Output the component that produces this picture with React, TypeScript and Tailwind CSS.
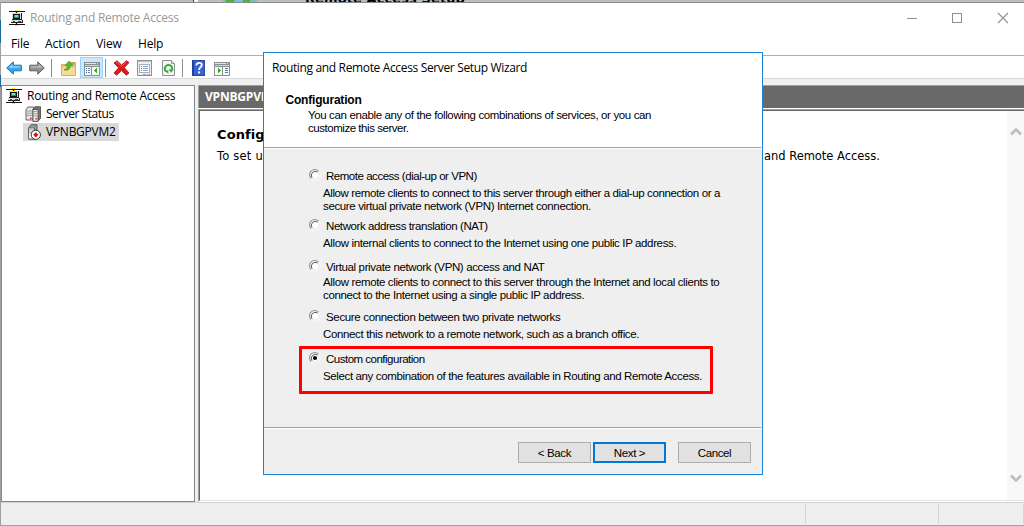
import type { ReactNode } from "react";

function RouterIcon() {
  return (
    <svg width="16" height="16" viewBox="0 0 16 16" shapeRendering="crispEdges" className="shrink-0">
      <path d="M0 1h16v1H0zM0 14h16v1H0z" fill="#111" />
      <path d="M6 0h3v1H6zM6 2h3v1H6zM6 13h3v1H6zM6 15h3v1H6z" fill="#ffe600" />
      <path d="M7 1h1v2H7zM7 13h1v2H7z" fill="#111" />
      <path d="M3 3h10v7H3z" fill="#222" />
      <path d="M3 3h9v6H3z" fill="#dcdcdc" />
      <path d="M4 4h7v5H4z" fill="#111" />
      <path d="M5 5h5v3H5z" fill="#1d8f7c" />
      <path d="M6 5h3v2H6z" fill="#6fe8cc" />
      <path d="M2 10h12v3H2z" fill="#222" />
      <path d="M2 10h11v2H2z" fill="#dcdcdc" />
      <path d="M4 11h2v1H4zM9 11h3v1H9z" fill="#444" />
    </svg>
  );
}

function ServersIcon() {
  return (
    <svg width="16" height="16" viewBox="0 0 16 16" className="shrink-0">
      <path d="M1 3.5l2-2.5h5.500V13l-1 1H1z" fill="#e8e8e8" stroke="#555" strokeWidth=".9" />
      <path d="M1.5 5h6M1.5 7.2h6M1.5 9.400h6" stroke="#888" strokeWidth=".8" />
      <path d="M8 3.5L10 .7h5.5v11.500L13 15.300H8z" fill="#777" stroke="#444" strokeWidth=".8" />
      <path d="M8 3.500h5v11.800H8z" fill="#eee" stroke="#444" strokeWidth=".8" />
      <path d="M8.500 5.600h4M8.500 7.800h4M8.500 10h4" stroke="#888" strokeWidth=".8" />
      <path d="M5 11.500h1.500V13H5zM10.500 12H12v1.500h-1.500z" fill="#f01818" />
    </svg>
  );
}

function StoppedServerIcon() {
  return (
    <svg width="16" height="16" viewBox="0 0 16 16" className="shrink-0">
      <path d="M3.5 4L6 .7h6V10l-3 5H3.5z" fill="#999" stroke="#444" strokeWidth=".8" />
      <path d="M3.5 4h6v11h-6z" fill="#f2f2f2" stroke="#555" strokeWidth=".8" />
      <path d="M4 6h5M4 8.2h5" stroke="#888" strokeWidth=".8" />
      <circle cx="10.8" cy="10.8" r="4.6" fill="#fff" stroke="#222" strokeWidth=".9" />
      <path d="M10.8 8.2l2.600 2.600-2.600 2.600L8.200 10.800z" fill="#e80c0c" />
    </svg>
  );
}

function ArrowIcon({ back }: { back?: boolean }) {
  return (
    <svg width="16" height="14" viewBox="0 0 16 14" className="shrink-0">
      {back ? (
        <g>
          <path d="M.7 7L7.3 .9v3.3h8v5.6h-8v3.3z" fill="#2fa8ee" stroke="#2471a8" strokeWidth="1" />
          <path d="M2.4 6.7l4-3.7v2.2h7.9v1.4z" fill="#8fd9ff" />
        </g>
      ) : (
        <g>
          <path d="M15.3 7L8.7 .9v3.3h-8v5.6h8v3.3z" fill="#8f8f8f" stroke="#606060" strokeWidth="1" />
          <path d="M13.6 6.7l-4-3.7v2.2H1.7v1.4z" fill="#bdbdbd" />
        </g>
      )}
    </svg>
  );
}

function FolderUpIcon() {
  return (
    <svg width="15" height="16" viewBox="0 0 15 16" className="shrink-0">
      <path d="M.6 4.500h5l1-2h7.800v13H.6z" fill="#e9c66e" stroke="#c79a3c" strokeWidth=".8" />
      <path d="M1 7.500h13v7.600H1z" fill="#f5dc93" />
      <path d="M10.500 3h3v1.500h-3z" fill="#6aa7dc" />
      <path d="M3 9.800c2.400-.5 3.600-2 3.500-4.300H4.400L8.200 1l3.500 4.500H9.400C9.500 9 7 11 3 9.800z" fill="#4ec42c" stroke="#2c8a1c" strokeWidth=".6" />
    </svg>
  );
}

function PaneIcon({ flipped }: { flipped?: boolean }) {
  return (
    <svg width="16" height="14" viewBox="0 0 16 14" shapeRendering="crispEdges" className="shrink-0">
      <path d="M0 0h16v14H0z" fill="#8a8f96" />
      <path d="M1 1h11v1H1zM13 1h1v1h-1z" fill="#dfe6ee" />
      <path d="M1 3h14v1H1z" fill="#cbd3dc" />
      <path d="M1 5h14v8H1z" fill="#fafafa" />
      {flipped ? (
        <g>
          <path d="M8 5h1v8H8z" fill="#8a8f96" />
          <path d="M11 6h3v1h-3zM11 8h3v1h-3zM11 10h3v1h-3z" fill="#4a7ca8" />
          <path d="M4 6h1v5H4zM5 7h1v3H5zM6 8h1v1H6z" fill="#35b022" />
        </g>
      ) : (
        <g>
          <path d="M7 5h1v8H7z" fill="#8a8f96" />
          <path d="M2 6h1v1H2zM2 8h1v1H2zM2 10h1v1H2z" fill="#3d6f9e" />
          <path d="M4 6h2v1H4zM4 8h2v1H4zM4 10h2v1H4z" fill="#6c87a5" />
          <path d="M12 6h1v5h-1zM11 7h1v3h-1zM10 8h1v1h-1z" fill="#35b022" />
        </g>
      )}
    </svg>
  );
}

function DeleteIcon() {
  return (
    <svg width="17" height="16" viewBox="0 0 17 16" className="shrink-0">
      <path d="M1 3L4 .8 8.5 5 13.4.7 16 2.6 11.3 7.6 16 13l-2.6 2.2-5-4.6-4.6 4.6L1 13l4.6-5.2z" fill="#dc1c1c" stroke="#a80f10" strokeWidth=".8" />
      <path d="M3 3l1-.9 4.5 4.2L13.2 2" fill="none" stroke="#f46a62" strokeWidth=".8" />
    </svg>
  );
}

function PropertiesIcon() {
  return (
    <svg width="15" height="16" viewBox="0 0 15 16" shapeRendering="crispEdges" className="shrink-0">
      <path d="M0 0h15v16H0z" fill="#8b8f96" />
      <path d="M1 1h13v14H1z" fill="#eef0f2" />
      <path d="M1 1h13v1H1z" fill="#b8c2cc" />
      <path d="M2 4h11v9H2z" fill="#9fb0c2" />
      <path d="M3 5h9v7H3z" fill="#fff" />
      <path d="M4 6h1v1H4zM4 8h1v1H4zM4 10h1v1H4z" fill="#2e8fd0" />
      <path d="M6 6h5v1H6zM6 8h5v1H6zM6 10h5v1H6z" fill="#8fa3b8" />
      <path d="M6 14h3v1H6zM10 14h3v1h-3z" fill="#a5a9ae" />
    </svg>
  );
}

function RefreshIcon() {
  return (
    <svg width="13" height="16" viewBox="0 0 13 16" className="shrink-0">
      <path d="M.5 .5h9l3 3v12H.5z" fill="#f5f5f5" stroke="#8b8f96" />
      <path d="M9.5 .5v3h3" fill="#ddd" stroke="#8b8f96" strokeWidth=".8" />
      <path d="M4.300 11.500A3.600 3.600 0 1 1 10 9.200" fill="none" stroke="#35a835" strokeWidth="1.9" />
      <path d="M11.800 9L9.200 12.800 6.600 9.400z" fill="#35a835" />
      <path d="M2.600 11.300l3.600-1 .2 3.200z" fill="#35a835" />
    </svg>
  );
}

function HelpIcon() {
  return (
    <svg width="13" height="16" viewBox="0 0 13 16" className="shrink-0">
      <path d="M0 0h13v16H0z" fill="#23409c" />
      <path d="M2 .8h10.3v14.4H2z" fill="#3c62cf" />
      <path d="M4.400 5.400c0-3.400 5.400-3.400 5.400-.4 0 2.200-2.700 2.300-2.700 5" fill="none" stroke="#fff" strokeWidth="1.8" />
      <path d="M6.100 11.400h2v2h-2z" fill="#fff" />
    </svg>
  );
}

function Chevron({ down }: { down?: boolean }) {
  return (
    <svg width="12" height="10" viewBox="0 0 12 10">
      <path d={down ? "M1 1.500l5 5 5-5" : "M1 7.500l5-5 5 5"} fill="none" stroke="#bdbdbd" strokeWidth="2.6" />
    </svg>
  );
}

function Radio({ checked }: { checked?: boolean }) {
  return (
    <svg width="12" height="12" viewBox="0 0 12 12" className="shrink-0">
      <circle cx="6" cy="6" r="5.500" fill="#fff" />
      <path d="M2.100 9.500A5.100 5.100 0 0 1 9.500 2.100" fill="none" stroke="#8f8f8f" strokeWidth="1.1" />
      <path d="M3 8.700A4.100 4.100 0 0 1 8.700 3" fill="none" stroke="#555" strokeWidth="1" />
      <path d="M3 9A4.200 4.200 0 0 0 9 3" fill="none" stroke="#dedede" strokeWidth=".9" />
      {checked && <circle cx="6" cy="6" r="2.100" fill="#000" />}
    </svg>
  );
}

function Option({ height, label, gap, checked, children }: { height: string; label: ReactNode; gap: string; checked?: boolean; children: ReactNode }) {
  return (
    <div className={height}>
      <div className="flex h-[13px]">
        <Radio checked={checked} />
        <div className="ml-[5px] leading-[15px]">{label}</div>
      </div>
      <div className={`ml-[14px] ${gap} leading-[13px]`}>{children}</div>
    </div>
  );
}

function Wizard() {
  return (
    <div className="absolute left-[263px] top-[52px] flex h-[423px] w-[500px] flex-col border border-[#1883d7] bg-[#efefef] font-['Liberation_Sans',sans-serif] text-[11.5px] whitespace-nowrap text-black">
      <div className="h-[94px] shrink-0 bg-white">
        <div className="pt-[6px] pl-[8px] font-['Open_Sans',sans-serif] text-[12px] leading-[18px] tracking-[-0.35px]">Routing and Remote Access Server Setup Wizard</div>
        <div className="mt-[16px] pl-[21.500px] text-[12px] leading-[14px] font-bold tracking-[-0.2px]">Configuration</div>
        <div className="mt-[2px] pl-[44px] leading-[13px]">
          <p className="tracking-[-0.37px]">You can enable any of the following combinations of services, or you can</p>
          <p className="tracking-[-0.46px]">customize this server.</p>
        </div>
      </div>
      <div className="mr-[1px] h-[2px] shrink-0 border-t border-[#a0a0a0] bg-white" />
      <div className="h-[278px] shrink-0 pt-[20px] pl-[45px]">
        <Option height="h-[50px]" gap="mt-[5px]" label={<span className="tracking-[-0.47px]">Remote access (dial-up or VPN)</span>}>
          <p className="tracking-[-0.39px]">Allow remote clients to connect to this server through either a dial-up connection or a</p>
          <p className="tracking-[-0.36px]">secure virtual private network (VPN) Internet connection.</p>
        </Option>
        <Option height="h-[41px]" gap="mt-[5px]" label={<span className="tracking-[-0.42px]">Network address translation (NAT)</span>}>
          <p className="tracking-[-0.37px]">Allow internal clients to connect to the Internet using one public IP address.</p>
        </Option>
        <Option height="h-[50px]" gap="mt-[3px]" label={<span className="tracking-[-0.37px]">Virtual private network (VPN) access and NAT</span>}>
          <p className="tracking-[-0.37px]">Allow remote clients to connect to this server through the Internet and local clients to</p>
          <p className="tracking-[-0.37px]">connect to the Internet using a single public IP address.</p>
        </Option>
        <Option height="h-[42px]" gap="mt-[5px]" label={<span className="tracking-[-0.34px]">Secure connection between two private networks</span>}>
          <p className="tracking-[-0.36px]">Connect this network to a remote network, such as a branch office.</p>
        </Option>
        <Option height="h-[42px]" gap="mt-[5px]" checked label={<span className="tracking-[-0.5px]">Custom configuration</span>}>
          <p className="tracking-[-0.37px]">Select any combination of the features available in Routing and Remote Access.</p>
        </Option>
      </div>
      <div className="mr-[1px] h-[2px] shrink-0 border-t border-[#a0a0a0] bg-white" />
      <div className="flex pt-[13px] pl-[254px]">
        <button className="h-[21px] w-[73px] border border-[#adadad] bg-[#e1e1e1] pt-px leading-[18px] tracking-[-0.35px]">&lt; Back</button>
        <button className="ml-[2px] h-[21px] w-[73px] border-2 border-[#0078d7] bg-[#e1e1e1] pt-px leading-[16px] tracking-[-0.35px]">Next &gt;</button>
        <button className="ml-[12px] h-[21px] w-[73px] border border-[#adadad] bg-[#e1e1e1] pt-px leading-[18px] tracking-[-0.42px]">Cancel</button>
      </div>
      <div className="absolute top-[293px] left-[35px] h-[48px] w-[414px] rounded-[1px] border-3 border-[#fe0000]" />
    </div>
  );
}

export default function App() {
  return (
    <div className="relative flex h-[526px] w-[1024px] flex-col overflow-hidden bg-[#efefef] font-['Open_Sans',sans-serif] text-[12px] whitespace-nowrap text-black">
      <div className="flex h-[2px] shrink-0 overflow-hidden bg-[#bebebe]">
        <div className="w-[193px] bg-[#bcbcbc]" />
        <div className="w-[5px] border-l border-[#444] bg-[#f4f4f4]" />
        <svg width="36" height="2" viewBox="0 0 36 2" className="ml-[24px]">
          <path d="M0 0h36l-3 2H3z" fill="#7cbfa8" />
          <path d="M3 0h9v2H5zM21 0h7v2h-9z" fill="#46b82e" />
          <path d="M13 0h8v2h-7z" fill="#86b9ea" />
        </svg>
        <div className="mt-[-9px] ml-[47px] font-['DejaVu_Sans',sans-serif] text-[13px] leading-[15px] font-bold tracking-[0.1px]">Remote Access Setup</div>
      </div>

      <div className="flex min-h-0 flex-1 flex-col border-t border-b border-l border-t-[#888b8e] border-b-[#a0a0a0] border-l-[#a0a0a0]">
        <div className="flex h-[30px] shrink-0 items-center bg-white pr-[15px] pl-[8px]">
          <RouterIcon />
          <span className="ml-[5px] tracking-[-0.24px] text-[#999]">Routing and Remote Access</span>
          <svg width="102" height="12" viewBox="0 0 102 12" className="ml-auto" fill="none" stroke="#8f8f8f">
            <path d="M0 6.500h10M45.500 1.500h9v9h-9z" shapeRendering="crispEdges" />
            <path d="M91 1l10 10M101 1L91 11" strokeWidth="1.1" />
          </svg>
        </div>
        <div className="flex h-[22px] shrink-0 bg-white pl-[10px] leading-[22px]">
          <span className="w-[34px] tracking-[-0.15px]">File</span>
          <span className="w-[51px]">Action</span>
          <span className="w-[42px] tracking-[-0.1px]">View</span>
          <span className="tracking-[-0.2px]">Help</span>
        </div>
        <div className="flex h-[24px] shrink-0 items-center border-t border-b border-t-[#afafaf] border-b-[#dadada] bg-white pt-px pl-[5px]">
          <ArrowIcon back />
          <div className="ml-[7px]"><ArrowIcon /></div>
          <div className="ml-[6px] h-[18px] w-px bg-[#8d8d8d]" />
          <div className="ml-[9px]"><FolderUpIcon /></div>
          <div className="ml-[4px] flex h-[21px] w-[23px] items-center justify-center border border-[#99d1ff] bg-[#cce8ff] pt-[3px]"><PaneIcon /></div>
          <div className="ml-[2px] h-[18px] w-px bg-[#8d8d8d]" />
          <div className="ml-[7px]"><DeleteIcon /></div>
          <div className="ml-[7px]"><PropertiesIcon /></div>
          <div className="ml-[10px]"><RefreshIcon /></div>
          <div className="ml-[7px] h-[18px] w-px bg-[#8d8d8d]" />
          <div className="ml-[9px]"><HelpIcon /></div>
          <div className="ml-[9px] pt-[3px]"><PaneIcon flipped /></div>
        </div>

        <div className="flex min-h-0 flex-1 pt-[6px]">
          <div className="h-[417px] w-[194px] shrink-0 border border-[#828790] bg-white pt-[1px] leading-[18px]">
            <div className="flex h-[18px] items-center pl-[4px]">
              <RouterIcon />
              <span className="ml-[5px] tracking-[-0.26px]">Routing and Remote Access</span>
            </div>
            <div className="flex h-[18px] items-center pl-[23px]">
              <ServersIcon />
              <span className="ml-[5px] tracking-[-0.48px]">Server Status</span>
            </div>
            <div className="ml-[21px] flex h-[18px] w-[96px] items-center bg-[#d9d9d9] pl-[2px]">
              <StoppedServerIcon />
              <span className="ml-[5px] tracking-[-0.26px]">VPNBGPVM2</span>
            </div>
          </div>

          <div className="ml-[3px] flex flex-1 flex-col">
            <div className="h-[23px] shrink-0 border-t border-l border-[#a0a0a0] bg-[#696969] pl-[6px] leading-[22px] font-bold tracking-[-0.2px] text-white">VPNBGPVM2</div>
            <div className="h-px shrink-0 bg-white" />
            <div className="h-[393px] shrink-0 border-t border-b border-l border-t-[#a0a0a0] border-b-white border-l-[#a0a0a0]">
              <div className="flex h-full border-t border-b border-l border-t-[#696969] border-b-[#e3e3e3] border-l-[#696969] bg-white">
                <div className="flex-1 pl-[17px] font-['DejaVu_Sans',sans-serif]">
                  <p className="mt-[16px] text-[13px] leading-[16px] font-bold tracking-[0.1px]">Configure the Server</p>
                  <p className="mt-[6px] text-[11.5px] leading-[15px] tracking-[-0.03px]"><span className="tracking-[0.2px]">To set u</span>p Routing and Remote Access, on the Action menu, click Configure and Enable Routing and Remote Access.</p>
                </div>
                <div className="flex w-[17px] flex-col items-end justify-between bg-[#f8f8f8] pt-[16px] pr-[2px] pb-[16px]">
                  <Chevron />
                  <Chevron down />
                </div>
              </div>
            </div>
          </div>
        </div>

        <div className="flex h-[23px] shrink-0 border-t border-[#d4d4d4] pt-px pb-px">
          <div className="w-[805px] border-r border-[#d4d4d4]" />
          <div className="w-[133px] border-r border-[#d4d4d4]" />
          <div className="flex-1 border-r border-[#d4d4d4]" />
        </div>
      </div>

      <div className="absolute top-[20px] left-0 h-[23px] w-px bg-[#1c6a9e]" />
      <div className="absolute top-[75px] left-0 h-[12px] w-px bg-[#1c6a9e]" />
      <Wizard />
    </div>
  );
}
